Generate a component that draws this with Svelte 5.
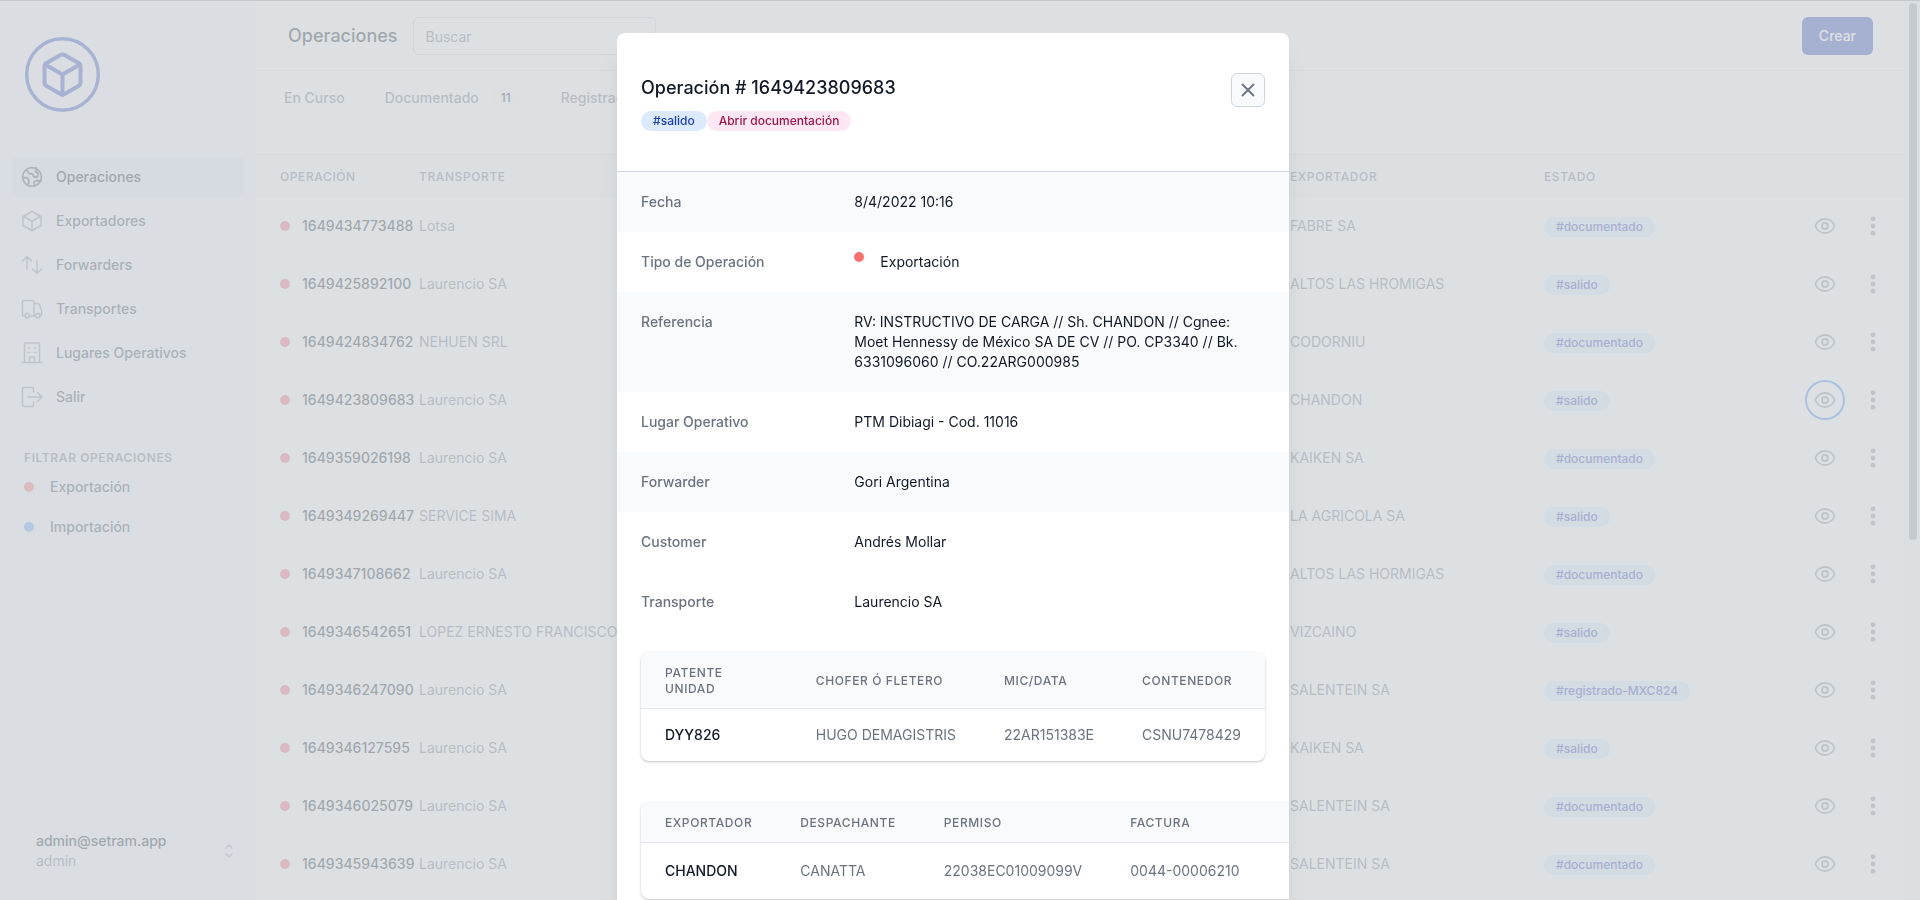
<script>
  const nav = [
    { label: 'Operaciones', icon: 'globe', active: true },
    { label: 'Exportadores', icon: 'box' },
    { label: 'Forwarders', icon: 'arrows' },
    { label: 'Transportes', icon: 'truck' },
    { label: 'Lugares Operativos', icon: 'building' },
    { label: 'Salir', icon: 'logout' }
  ];

  const filters = [
    { label: 'Exportación', color: 'red' },
    { label: 'Importación', color: 'blue' }
  ];

  const operations = [
    { id: '1649434773488', transport: 'Lotsa', exporter: 'FABRE SA', status: '#documentado' },
    { id: '1649425892100', transport: 'Laurencio SA', exporter: 'ALTOS LAS HROMIGAS', status: '#salido' },
    { id: '1649424834762', transport: 'NEHUEN SRL', exporter: 'CODORNIU', status: '#documentado' },
    { id: '1649423809683', transport: 'Laurencio SA', exporter: 'CHANDON', status: '#salido' },
    { id: '1649359026198', transport: 'Laurencio SA', exporter: 'KAIKEN SA', status: '#documentado' },
    { id: '1649349269447', transport: 'SERVICE SIMA', exporter: 'LA AGRICOLA SA', status: '#salido' },
    { id: '1649347108662', transport: 'Laurencio SA', exporter: 'ALTOS LAS HORMIGAS', status: '#documentado' },
    { id: '1649346542651', transport: 'LOPEZ ERNESTO FRANCISCO', exporter: 'VIZCAINO', status: '#salido' },
    { id: '1649346247090', transport: 'Laurencio SA', exporter: 'SALENTEIN SA', status: '#registrado-MXC824' },
    { id: '1649346127595', transport: 'Laurencio SA', exporter: 'KAIKEN SA', status: '#salido' },
    { id: '1649346025079', transport: 'Laurencio SA', exporter: 'SALENTEIN SA', status: '#documentado' },
    { id: '1649345943639', transport: 'Laurencio SA', exporter: 'SALENTEIN SA', status: '#documentado' }
  ];

  const selected = '1649423809683';

  const details = [
    { label: 'Fecha', value: '8/4/2022 10:16', shaded: true },
    { label: 'Tipo de Operación', value: 'Exportación', dot: true },
    {
      label: 'Referencia',
      value: 'RV: INSTRUCTIVO DE CARGA // Sh. CHANDON // Cgnee: Moet Hennessy de México SA DE CV // PO. CP3340 // Bk. 6331096060 // CO.22ARG000985',
      shaded: true
    },
    { label: 'Lugar Operativo', value: 'PTM Dibiagi - Cod. 11016' },
    { label: 'Forwarder', value: 'Gori Argentina', shaded: true },
    { label: 'Customer', value: 'Andrés Mollar' },
    { label: 'Transporte', value: 'Laurencio SA' }
  ];
</script>

<div class="app">
  <aside class="sidebar">
    <svg class="logo" viewBox="0 0 75 75" fill="none" stroke="currentColor" stroke-linecap="round" stroke-linejoin="round">
      <circle cx="37.5" cy="37.5" r="35.8" stroke-width="3.4" />
      <g transform="translate(13.5 13.5) scale(2)" stroke-width="2">
        <path d="M21 16V8a2 2 0 0 0-1-1.73l-7-4a2 2 0 0 0-2 0l-7 4A2 2 0 0 0 3 8v8a2 2 0 0 0 1 1.73l7 4a2 2 0 0 0 2 0l7-4A2 2 0 0 0 21 16z" />
        <path d="M3.27 6.96 12 12.01l8.73-5.05M12 22.08V12" />
      </g>
    </svg>

    <nav>
      {#each nav as item}
        <a href="#{item.icon}" class="nav-item" class:active={item.active}>
          <svg class="icon" viewBox="0 0 24 24" fill="none" stroke="currentColor" stroke-width="1.5" stroke-linecap="round" stroke-linejoin="round">
            {#if item.icon === 'globe'}
              <circle cx="12" cy="12" r="9.3" stroke-width="1.8" />
              <path stroke-width="1.8" d="M6.5 4.5 9 8.5l3.5.5 1.5 3h3.5l.5-3.5-2.5-2 .5-3.5M2.8 12.5l4.7.5 1.5 3-1 4.5M14.5 21l-.5-4 2.5-1.5 4.5.5" />
            {:else if item.icon === 'box'}
              <path d="M21 16.5v-9L12 2.5l-9 5v9l9 5zM3.4 7.4 12 12l8.6-4.6M12 21.2V12" />
            {:else if item.icon === 'arrows'}
              <path d="M7 16V3.5M7 3.5 2.5 8M7 3.5 11.5 8M17 8v12.5M17 20.5l4.5-4.5M17 20.5 12.500 16" />
            {:else if item.icon === 'truck'}
              <path d="M5 19H4a1.5 1.5 0 0 1-1.5-1.5V5A1.5 1.5 0 0 1 4 3.5h8.500A1.5 1.5 0 0 1 14 5v14H9.500M14 6.500h3a3 3 0 0 1 2.700 1.800L21.500 13v4.500A1.5 1.5 0 0 1 20 19M14 19h1.500" />
              <circle cx="7.2" cy="18.7" r="2.2" />
              <circle cx="17.8" cy="18.7" r="2.2" />
            {:else if item.icon === 'building'}
              <path d="M2 21.5h20M4.5 21.500v-18A1.5 1.5 0 0 1 6 2h12a1.5 1.5 0 0 1 1.5 1.5v18M9.500 21.500V17a1 1 0 0 1 1-1h3a1 1 0 0 1 1 1v4.500M8 7h1.500M14.500 7H16M8 11.500h1.500M14.500 11.500H16" />
            {:else}
              <path d="M13.5 7V4A1.5 1.5 0 0 0 12 2.500H4A1.5 1.5 0 0 0 2.500 4v16A1.5 1.5 0 0 0 4 21.500h8a1.5 1.5 0 0 0 1.500-1.500v-3M8 12h14M17.500 7.500 22 12l-4.500 4.500" />
            {/if}
          </svg>
          {item.label}
        </a>
      {/each}
    </nav>

    <h3>Filtrar operaciones</h3>
    {#each filters as filter}
      <a href="#{filter.color}" class="filter"><span class="dot {filter.color}"></span>{filter.label}</a>
    {/each}

    <button class="user">
      <span>
        <strong>admin@setram.app</strong>
        <small>admin</small>
      </span>
      <svg viewBox="0 0 20 20" width="20" height="20" fill="none" stroke="currentColor" stroke-width="1.6" stroke-linecap="round" stroke-linejoin="round">
        <path d="M7 7l3-3 3 3M7 13l3 3 3-3" />
      </svg>
    </button>
  </aside>

  <main>
    <header class="topbar">
      <h1>Operaciones</h1>
      <input type="text" placeholder="Buscar" aria-label="Buscar" />
      <button class="create">Crear</button>
    </header>

    <div class="tabs">
      <a href="#en-curso">En Curso</a>
      <a href="#documentado">Documentado<span class="count">11</span></a>
      <a href="#registrado">Registrado</a>
    </div>

    <table class="operations">
      <thead>
        <tr>
          <th class="col-id">Operación</th>
          <th>Transporte</th>
          <th class="col-exporter">Exportador</th>
          <th class="col-status">Estado</th>
          <th class="col-view"></th>
          <th class="col-menu"></th>
        </tr>
      </thead>
      <tbody>
        {#each operations as op}
          <tr>
            <td class="col-id"><div class="op-id"><span class="dot pink"></span>{op.id}</div></td>
            <td>{op.transport}</td>
            <td>{op.exporter}</td>
            <td><span class="pill">{op.status}</span></td>
            <td>
              <button class="view" class:focused={op.id === selected} aria-label="Ver">
                <svg viewBox="0 0 24 24" width="24" height="24" fill="none" stroke="currentColor" stroke-width="1.8" stroke-linecap="round" stroke-linejoin="round">
                  <circle cx="12" cy="12" r="3" />
                  <path d="M2.458 12C3.732 7.943 7.523 5 12 5c4.478 0 8.268 2.943 9.542 7-1.274 4.057-5.064 7-9.542 7-4.477 0-8.268-2.943-9.542-7z" />
                </svg>
              </button>
            </td>
            <td>
              <button class="menu" aria-label="Opciones">
                <svg viewBox="0 0 20 20" width="24" height="24" fill="currentColor">
                  <circle cx="10" cy="4" r="2" />
                  <circle cx="10" cy="10" r="2" />
                  <circle cx="10" cy="16" r="2" />
                </svg>
              </button>
            </td>
          </tr>
        {/each}
      </tbody>
    </table>
  </main>
  <div class="scrollbar"></div>
</div>

<div class="overlay">
  <section class="modal" role="dialog" aria-labelledby="modal-title">
    <header class="modal-header">
      <div>
        <h2 id="modal-title">Operación # {selected}</h2>
        <div class="tags">
          <span class="pill">#salido</span>
          <a href="#documentacion" class="pill rose">Abrir documentación</a>
        </div>
      </div>
      <button class="close" aria-label="Cerrar">
        <svg viewBox="0 0 24 24" width="22" height="22" fill="none" stroke="currentColor" stroke-width="2" stroke-linecap="round">
          <path d="M6 18L18 6M6 6l12 12" />
        </svg>
      </button>
    </header>

    <dl>
      {#each details as row}
        <div class="detail" class:shaded={row.shaded}>
          <dt>{row.label}</dt>
          <dd>{#if row.dot}<span class="dot red"></span>{/if}{row.value}</dd>
        </div>
      {/each}
    </dl>

    <div class="card">
      <table>
        <thead>
          <tr>
            <th class="wrap">Patente Unidad</th>
            <th>Chofer ó fletero</th>
            <th>MIC/DATA</th>
            <th>Contenedor</th>
          </tr>
        </thead>
        <tbody>
          <tr>
            <td>DYY826</td>
            <td>HUGO DEMAGISTRIS</td>
            <td>22AR151383E</td>
            <td>CSNU7478429</td>
          </tr>
        </tbody>
      </table>
    </div>

    <div class="card wide">
      <table>
        <thead>
          <tr>
            <th>Exportador</th>
            <th>Despachante</th>
            <th>Permiso</th>
            <th>Factura</th>
            <th></th>
          </tr>
        </thead>
        <tbody>
          <tr>
            <td>CHANDON</td>
            <td>CANATTA</td>
            <td>22038EC01009099V</td>
            <td>0044-00006210</td>
            <td></td>
          </tr>
        </tbody>
      </table>
    </div>
  </section>
</div>

<style>
  :global(body) {
    margin: 0;
    font-family: Inter, "Liberation Sans", sans-serif;
    font-size: 14px;
    line-height: 20px;
    color: #111827;
  }

  .app, .app *, .overlay, .overlay * {
    box-sizing: border-box;
  }

  h1, h2, h3, dl, dd {
    margin: 0;
  }

  a {
    color: inherit;
    text-decoration: none;
  }

  button {
    font: inherit;
    color: inherit;
    background: none;
    border: 0;
    padding: 0;
  }

  table {
    border-collapse: separate;
    border-spacing: 0;
    width: 100%;
  }

  th {
    font-size: 12px;
    line-height: 16px;
    font-weight: 500;
    letter-spacing: 0.05em;
    text-transform: uppercase;
    text-align: left;
    color: #6b7280;
  }

  .app {
    display: flex;
    height: 100vh;
    overflow: hidden;
    background: #fff;
  }

  .sidebar {
    display: flex;
    flex-direction: column;
    flex: none;
    width: 256px;
    padding: 37px 12px 29px;
    background: #f6f7f9;
  }

  .logo {
    width: 75px;
    height: 75px;
    margin: 0 0 45px 13px;
    color: #3348c0;
  }

  .nav-item {
    display: flex;
    align-items: center;
    gap: 12px;
    height: 40px;
    margin-bottom: 4px;
    padding: 0 8px;
    border-radius: 6px;
    font-weight: 500;
    color: #374151;
  }

  .nav-item .icon {
    width: 24px;
    height: 24px;
    color: #8b919c;
  }

  .nav-item.active {
    background: #e6e9f8;
    color: #111827;
  }

  .nav-item.active .icon {
    color: #4b5563;
  }

  .sidebar h3 {
    margin: 29px 12px 1px;
    font-size: 12px;
    line-height: 16px;
    font-weight: 600;
    letter-spacing: 0.05em;
    text-transform: uppercase;
    color: #6b7280;
  }

  .filter {
    display: flex;
    align-items: center;
    gap: 16px;
    height: 40px;
    padding: 0 12px;
    font-weight: 500;
    color: #374151;
  }

  .dot {
    flex: none;
    width: 10px;
    height: 10px;
    border-radius: 50%;
  }

  .red {
    background: #f87171;
  }

  .pink {
    background: #f8657d;
  }

  .blue {
    background: #60a0ff;
  }

  .user {
    display: flex;
    align-items: center;
    justify-content: space-between;
    margin-top: auto;
    padding: 0 5px 0 24px;
    text-align: left;
  }

  .user strong {
    display: block;
    font-weight: 500;
  }

  .user small {
    display: block;
    font-size: 14px;
    color: #6b7280;
  }

  .user svg {
    color: #9ca3af;
  }

  main {
    flex: 1;
    min-width: 0;
  }

  .topbar {
    display: flex;
    align-items: center;
    height: 71px;
    padding: 2px 31px 0 32px;
    border-bottom: 1px solid #e5e7eb;
  }

  h1 {
    margin-right: 15px;
    font-size: 18px;
    line-height: 24px;
    font-weight: 500;
  }

  input {
    width: 243px;
    height: 38px;
    padding: 0 12px;
    border: 1px solid #d1d5db;
    border-radius: 6px;
    font: inherit;
    background: #fff;
  }

  input::placeholder {
    color: #6b7280;
    opacity: 1;
  }

  .create {
    height: 38px;
    margin-left: auto;
    padding: 0 17px;
    border-radius: 6px;
    font-weight: 500;
    color: #fff;
    background: #2b40b4;
  }

  .tabs {
    display: flex;
    gap: 32px;
    height: 84px;
    padding: 16px 24px 0;
    border-bottom: 1px solid #e5e7eb;
    font-weight: 500;
    color: #6b7280;
  }

  .tabs a {
    display: flex;
    align-items: center;
    height: 22px;
    padding: 0 4px;
  }

  .count {
    margin-left: 12px;
    padding: 2px 10px;
    border-radius: 10px;
    font-size: 12px;
    line-height: 16px;
    color: #111827;
    background: #f9fafb;
  }

  .operations {
    table-layout: fixed;
  }

  .operations th {
    height: 42px;
    padding: 2px 0 0;
    background: #f9fafb;
    border-bottom: 1px solid #f3f4f6;
  }

  .operations td {
    height: 58px;
    padding: 0;
    color: #6b7280;
    white-space: nowrap;
  }

  .operations .col-id {
    width: 163px;
    padding-left: 24px;
    font-weight: 500;
  }

  .operations td.col-id {
    color: #111827;
  }

  .op-id {
    display: flex;
    align-items: center;
    gap: 12px;
  }

  .col-exporter {
    width: 254px;
  }

  .col-status {
    width: 261px;
  }

  .col-view {
    width: 56px;
  }

  .col-menu {
    width: 43px;
  }

  .pill {
    display: inline-block;
    padding: 2px 12px;
    border-radius: 10px;
    font-size: 12px;
    line-height: 16px;
    font-weight: 500;
    color: #1e40af;
    background: #dbeafe;
  }

  .pill.rose {
    color: #9d174d;
    background: #fce7f3;
  }

  .view, .menu {
    display: flex;
    align-items: center;
    justify-content: center;
    width: 40px;
    height: 40px;
    border-radius: 50%;
    color: #8b919c;
  }

  .menu {
    width: 24px;
  }

  .view.focused {
    box-shadow: inset 0 0 0 2px #3b82f6;
  }

  .scrollbar {
    flex: none;
    width: 16px;
    padding: 3px 3px 0 5px;
    background: #fafafa;
  }

  .scrollbar::before {
    content: '';
    display: block;
    height: calc(60vh - 3px);
    border-radius: 4px;
    background: #a4a9b0;
  }

  .overlay {
    position: fixed;
    inset: 0;
    display: flex;
    justify-content: center;
    align-items: flex-start;
    overflow: hidden;
    padding: 32px 14px 0 0;
    border-top: 1px solid #c5c9cd;
    background: rgba(208, 213, 217, 0.75);
  }

  .modal {
    flex: 0 1 672px;
    min-width: 0;
    padding-bottom: 40px;
    overflow: hidden;
    border-radius: 8px;
    background: #fff;
    box-shadow: 0 20px 25px -5px rgba(0, 0, 0, 0.1), 0 10px 10px -5px rgba(0, 0, 0, 0.04);
  }

  .modal-header {
    display: flex;
    align-items: flex-start;
    justify-content: space-between;
    padding: 40px 24px;
    border-bottom: 1px solid #d1d5db;
  }

  h2 {
    margin-bottom: 8px;
    font-size: 18px;
    line-height: 30px;
    font-weight: 500;
  }

  .tags {
    display: flex;
  }

  .close {
    display: flex;
    padding: 5px;
    border: 1px solid #d1d5db;
    border-radius: 6px;
    color: #6b7280;
    background: #f9fafb;
  }

  .detail {
    display: grid;
    grid-template-columns: repeat(3, 1fr);
    gap: 16px;
    padding: 20px 24px;
  }

  .detail.shaded {
    background: #f9fafb;
  }

  dt {
    font-weight: 500;
    color: #6b7280;
  }

  dd {
    display: flex;
    grid-column: span 2;
    gap: 16px;
  }

  .card {
    margin: 20px 24px 41px;
    overflow: hidden;
    border-radius: 8px;
    box-shadow: 0 1px 3px rgba(0, 0, 0, 0.15), 0 1px 2px rgba(0, 0, 0, 0.1);
  }

  .card.wide {
    width: max-content;
  }

  .card th {
    padding: 13px 24px 11px;
    white-space: nowrap;
    background: #f9fafb;
    border-bottom: 1px solid #e5e7eb;
  }

  .card th.wrap {
    white-space: normal;
  }

  .card td {
    padding: 16px 24px;
    white-space: nowrap;
    color: #6b7280;
  }

  .card td:first-child {
    font-weight: 500;
    color: #111827;
  }

  .card.wide td {
    padding: 18px 24px;
  }
</style>
